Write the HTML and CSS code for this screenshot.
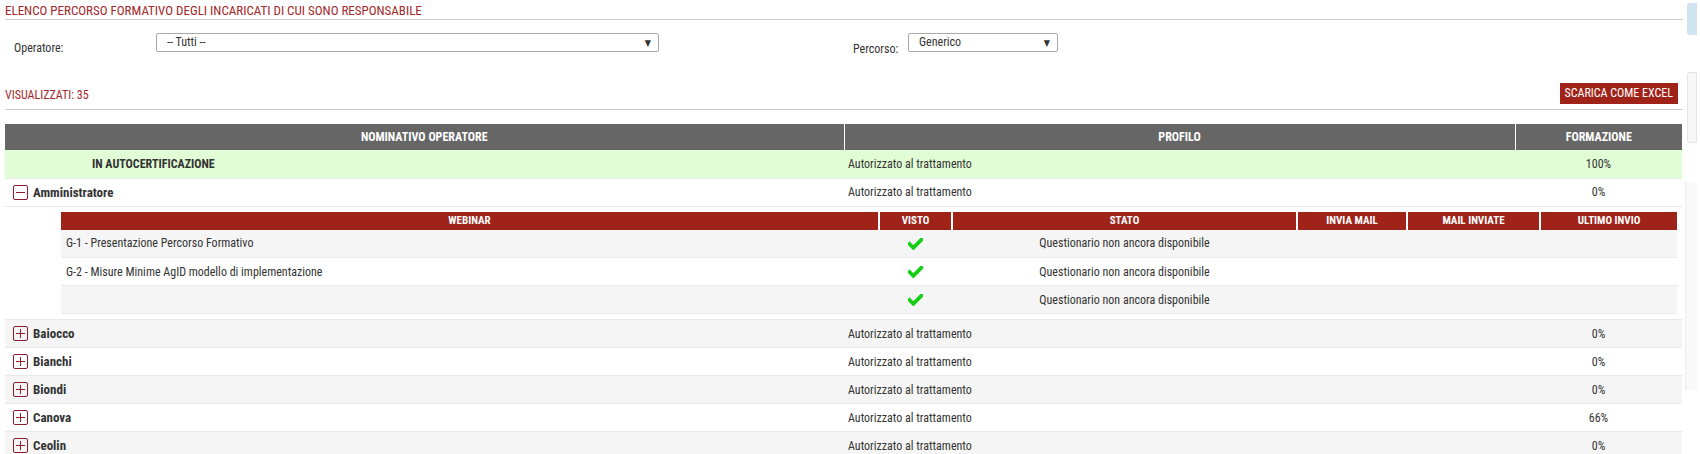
FILE: index.html
```html
<!DOCTYPE html>
<html>

<head>
  <link rel="stylesheet" href="styles.css">
</head>

<body>
  <div class="page">
    <div class="page-title">ELENCO PERCORSO FORMATIVO DEGLI INCARICATI DI CUI SONO RESPONSABILE</div>

    <div class="filters">
      <div class="filter filter-operatore">
        <label class="filter-label">Operatore:</label>
        <div class="select select-wide">
          <span>-- Tutti --</span>
          <span class="select-arrow">&#9660;</span>
        </div>
      </div>
      <div class="filter filter-percorso">
        <label class="filter-label">Percorso:</label>
        <div class="select select-small">
          <span>Generico</span>
          <span class="select-arrow">&#9660;</span>
        </div>
      </div>
    </div>

    <div class="summary">
      <div class="summary-count">VISUALIZZATI: 35</div>
      <div class="btn-excel">SCARICA COME EXCEL</div>
    </div>

    <table class="grid">
      <colgroup>
        <col class="col-name">
        <col class="col-profile">
        <col class="col-score">
      </colgroup>
      <thead>
        <tr>
          <th>NOMINATIVO OPERATORE</th>
          <th>PROFILO</th>
          <th>FORMAZIONE</th>
        </tr>
      </thead>
      <tbody>
        <tr class="row-auto">
          <td class="name-auto">IN AUTOCERTIFICAZIONE</td>
          <td>Autorizzato al trattamento</td>
          <td class="score">100%</td>
        </tr>
        <tr class="row-plain">
          <td class="name"><span class="toggle open"></span>Amministratore</td>
          <td>Autorizzato al trattamento</td>
          <td class="score">0%</td>
        </tr>
        <tr class="row-detail">
          <td colspan="3">
            <table class="sub-grid">
              <colgroup>
                <col class="sub-webinar">
                <col class="sub-visto">
                <col class="sub-stato">
                <col class="sub-invia">
                <col class="sub-inviate">
                <col class="sub-ultimo">
              </colgroup>
              <thead>
                <tr>
                  <th>WEBINAR</th>
                  <th>VISTO</th>
                  <th>STATO</th>
                  <th>INVIA MAIL</th>
                  <th>MAIL INVIATE</th>
                  <th>ULTIMO INVIO</th>
                </tr>
              </thead>
              <tbody>
                <tr>
                  <td>G-1 - Presentazione Percorso Formativo</td>
                  <td class="center"><svg class="check" viewBox="0 0 14 11"><path d="M1.5 5.5 L5 9 L12.5 1.5" /></svg></td>
                  <td class="center">Questionario non ancora disponibile</td>
                  <td></td>
                  <td></td>
                  <td></td>
                </tr>
                <tr>
                  <td>G-2 - Misure Minime AgID modello di implementazione</td>
                  <td class="center"><svg class="check" viewBox="0 0 14 11"><path d="M1.5 5.5 L5 9 L12.5 1.5" /></svg></td>
                  <td class="center">Questionario non ancora disponibile</td>
                  <td></td>
                  <td></td>
                  <td></td>
                </tr>
                <tr>
                  <td></td>
                  <td class="center"><svg class="check" viewBox="0 0 14 11"><path d="M1.5 5.5 L5 9 L12.5 1.5" /></svg></td>
                  <td class="center">Questionario non ancora disponibile</td>
                  <td></td>
                  <td></td>
                  <td></td>
                </tr>
              </tbody>
            </table>
          </td>
        </tr>
        <tr class="row-alt">
          <td class="name"><span class="toggle"></span>Baiocco</td>
          <td>Autorizzato al trattamento</td>
          <td class="score">0%</td>
        </tr>
        <tr class="row-plain">
          <td class="name"><span class="toggle"></span>Bianchi</td>
          <td>Autorizzato al trattamento</td>
          <td class="score">0%</td>
        </tr>
        <tr class="row-alt">
          <td class="name"><span class="toggle"></span>Biondi</td>
          <td>Autorizzato al trattamento</td>
          <td class="score">0%</td>
        </tr>
        <tr class="row-plain">
          <td class="name"><span class="toggle"></span>Canova</td>
          <td>Autorizzato al trattamento</td>
          <td class="score">66%</td>
        </tr>
        <tr class="row-alt">
          <td class="name"><span class="toggle"></span>Ceolin</td>
          <td>Autorizzato al trattamento</td>
          <td class="score">0%</td>
        </tr>
      </tbody>
    </table>
  </div>

  <div class="gutter">
    <div class="gutter-thumb"></div>
    <div class="gutter-track"></div>
    <div class="gutter-strip"></div>
  </div>
</body>

</html>
```

FILE: styles.css
```css
* {
  box-sizing: border-box;
}

html,
body {
  margin: 0;
  padding: 0;
  height: 454px;
  overflow: hidden;
}

body {
  display: flex;
  font-family: "Liberation Sans Narrow", "Arial Narrow", "Roboto Condensed", "DejaVu Sans", sans-serif;
  font-stretch: condensed;
  font-size: 12px;
  color: #333;
  background: #fff;
}

.page {
  width: 1683px;
  padding-left: 5px;
}

.page-title {
  font-size: 13px;
  color: #a3282a;
  padding-top: 3px;
  height: 20px;
  border-bottom: 1px solid #ccc;
}

/* filtri */

.filters {
  display: flex;
  padding: 13px 0 0 9px;
  height: 63px;
}

.filter {
  display: flex;
  align-items: flex-start;
}

.filter-operatore {
  width: 839px;
}

.filter-label {
  padding-top: 8px;
}

.filter-operatore .filter-label {
  width: 142px;
}

.filter-percorso .filter-label {
  width: 55px;
  padding-top: 9px;
}

.select {
  display: flex;
  justify-content: space-between;
  height: 19px;
  padding: 1px 7px 0 10px;
  border: 1px solid #a9a9a9;
  border-radius: 2px;
  background: #fff;
}

.select-wide {
  width: 503px;
}

.select-small {
  width: 150px;
}

.select-arrow {
  font-size: 9px;
  padding-top: 3px;
  color: #333;
}

/* riepilogo */

.summary {
  display: flex;
  justify-content: space-between;
  align-items: flex-end;
  height: 27px;
  padding: 0 5px 5px 0;
  border-bottom: 1px solid #ccc;
}

.summary-count {
  color: #a3282a;
  padding-bottom: 2px;
}

.btn-excel {
  background: #a0231a;
  color: #fff;
  height: 21px;
  line-height: 21px;
  padding: 0 5px;
  font-size: 12px;
}

/* tabella principale */

.grid {
  width: 1677px;
  margin-top: 14px;
  border-collapse: collapse;
  table-layout: fixed;
}

.col-name {
  width: 839px;
}

.col-profile {
  width: 671px;
}

.col-score {
  width: 167px;
}

.grid > thead th {
  background: #666;
  color: #fff;
  font-weight: bold;
  height: 26px;
  padding: 0;
  border-left: 1px solid #fff;
}

.grid > thead th:first-child {
  border-left: none;
}

.grid > tbody > tr > td {
  height: 28px;
  padding: 0 4px;
  border-bottom: 1px solid #e8e8e8;
  vertical-align: middle;
}

.row-auto {
  background: #e1fdd6;
}

.row-plain {
  background: #fff;
}

.row-alt {
  background: #f5f5f5;
}

.grid > tbody > tr > td.name-auto {
  font-weight: bold;
  padding-left: 87px;
}

.name {
  font-weight: bold;
  font-size: 13px;
}

.score {
  text-align: center;
}

.toggle {
  display: inline-block;
  position: relative;
  width: 15px;
  height: 15px;
  margin: 0 5px 0 4px;
  vertical-align: -3px;
  border: 1px solid #8c1d2e;
  border-radius: 2px;
}

.toggle::before,
.toggle::after {
  content: "";
  position: absolute;
  background: #8c1d2e;
}

.toggle::before {
  left: 2px;
  right: 2px;
  top: 6px;
  height: 1px;
}

.toggle::after {
  top: 2px;
  bottom: 2px;
  left: 6px;
  width: 1px;
}

.toggle.open::after {
  display: none;
}

/* dettaglio webinar */

.grid > tbody > tr.row-detail > td {
  height: auto;
  padding: 5px 5px 5px 56px;
  background: #fff;
}

.sub-grid {
  width: 100%;
  border-collapse: collapse;
  table-layout: fixed;
}

.sub-webinar {
  width: 818px;
}

.sub-visto {
  width: 73px;
}

.sub-stato {
  width: 345px;
}

.sub-invia {
  width: 110px;
}

.sub-inviate {
  width: 133px;
}

.sub-ultimo {
  width: 137px;
}

.sub-grid th {
  background: #a0231a;
  color: #fff;
  font-size: 11px;
  font-weight: bold;
  height: 18px;
  padding: 0;
  border-left: 2px solid #fff;
}

.sub-grid th:first-child {
  border-left: none;
}

.sub-grid td {
  height: 28px;
  padding: 0 5px;
  border-bottom: 1px solid #eaeaea;
}

.sub-grid tbody tr:nth-child(odd) {
  background: #f5f5f5;
}

.sub-grid .center {
  text-align: center;
}

.check {
  width: 15px;
  height: 12px;
  vertical-align: middle;
}

.check path {
  fill: none;
  stroke: #14cf14;
  stroke-width: 3.6;
  stroke-linecap: square;
}

/* barre di scorrimento */

.gutter {
  flex: 1;
  display: flex;
  flex-direction: column;
  align-items: flex-end;
  padding-right: 3px;
}

.gutter-thumb {
  width: 10px;
  height: 32px;
  margin-top: 3px;
  background: #cfe4f1;
  border-radius: 3px 0 0 3px;
}

.gutter-track {
  width: 10px;
  height: 71px;
  margin-top: 37px;
  background: #f7f7f7;
  border: 1px solid #e4e4e4;
  border-radius: 3px 0 0 3px;
}

.gutter-strip {
  width: 12px;
  height: 208px;
  margin-top: 39px;
  background: #f9f9f9;
  border-left: 1px solid #eee;
}
```
